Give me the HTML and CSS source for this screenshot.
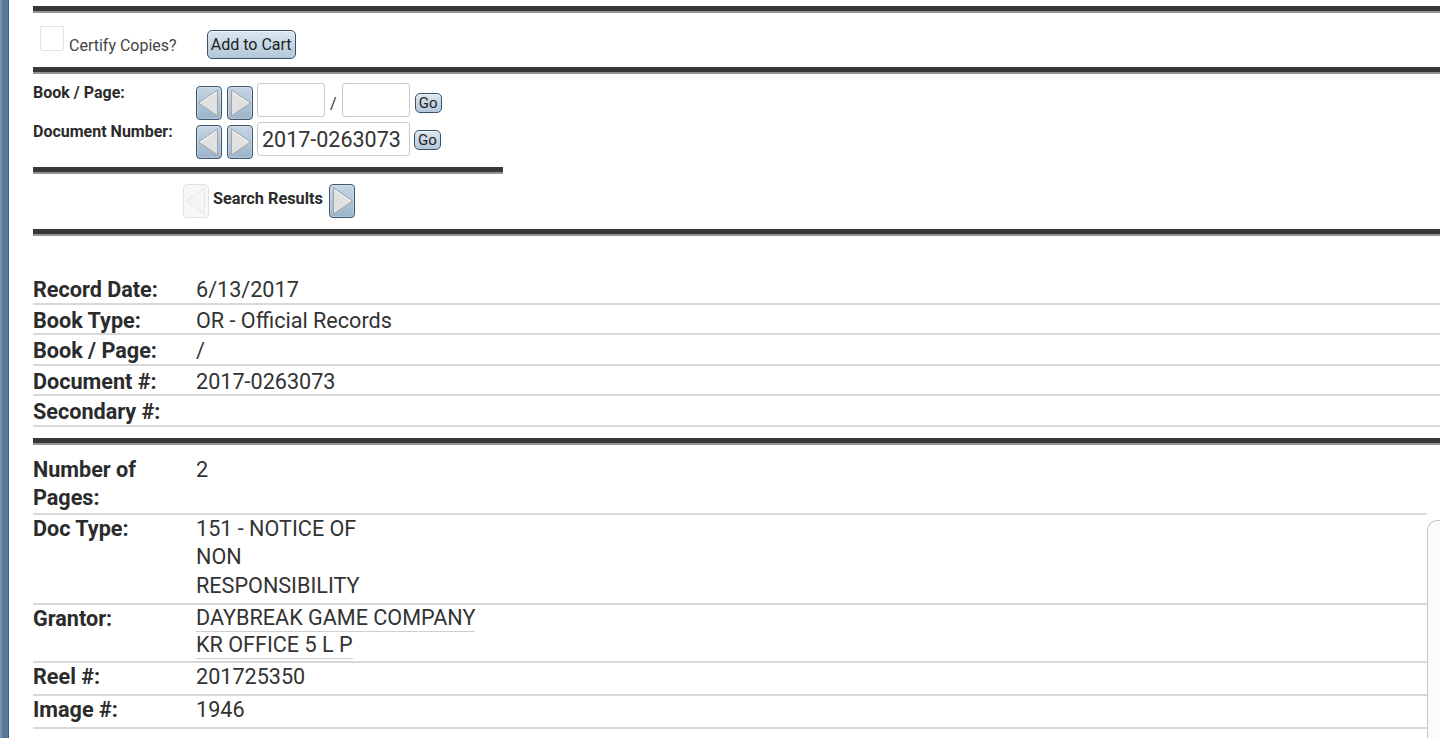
FILE: index.html
```html
<!DOCTYPE html>
<html lang="en">
<head>
<meta charset="utf-8">
<title>Document Detail</title>
<link rel="stylesheet" href="styles.css">
</head>
<body>
<div class="page">
  <div class="rail"></div>
  <main class="content">
    <div class="rule"></div>
    <div class="cart-bar">
      <span class="checkbox"></span>
      <span class="cert-label">Certify Copies?</span>
      <button class="btn cart-btn">Add to Cart</button>
    </div>
    <div class="rule"></div>
    <div class="nav-grid">
      <div class="nav-label">Book / Page:</div>
      <div class="nav-controls">
        <button class="arrow"><svg viewBox="0 0 24 32" width="24" height="32"><polygon points="1.5,16 20.5,3 20.5,29" fill="#e1e1e1" stroke="#9ea5ac" stroke-width="1"/><polyline points="3.5,16 19.5,5" fill="none" stroke="#fafafa" stroke-width="1"/></svg></button>
        <button class="arrow"><svg viewBox="0 0 24 32" width="24" height="32"><polygon points="22.5,16 3.5,3 3.5,29" fill="#e1e1e1" stroke="#9ea5ac" stroke-width="1"/><polyline points="4.5,5 20.5,16" fill="none" stroke="#fafafa" stroke-width="1"/></svg></button>
        <input class="field field-sm" type="text" value="">
        <span class="slash">/</span>
        <input class="field field-sm field-after" type="text" value="">
        <button class="btn go">Go</button>
      </div>
      <div class="nav-label">Document Number:</div>
      <div class="nav-controls">
        <button class="arrow"><svg viewBox="0 0 24 32" width="24" height="32"><polygon points="1.5,16 20.5,3 20.5,29" fill="#e1e1e1" stroke="#9ea5ac" stroke-width="1"/><polyline points="3.5,16 19.5,5" fill="none" stroke="#fafafa" stroke-width="1"/></svg></button>
        <button class="arrow"><svg viewBox="0 0 24 32" width="24" height="32"><polygon points="22.5,16 3.5,3 3.5,29" fill="#e1e1e1" stroke="#9ea5ac" stroke-width="1"/><polyline points="4.5,5 20.5,16" fill="none" stroke="#fafafa" stroke-width="1"/></svg></button>
        <input class="field field-lg" type="text" value="2017-0263073">
        <button class="btn go go-low">Go</button>
      </div>
    </div>
    <div class="rule rule-short"></div>
    <div class="results-bar">
      <button class="arrow arrow-disabled"><svg viewBox="0 0 24 32" width="24" height="32"><polygon points="1.5,16 20.5,3 20.5,29" fill="#f4f4f4" stroke="#e4e6e8" stroke-width="1"/></svg></button>
      <span class="results-label">Search Results</span>
      <button class="arrow"><svg viewBox="0 0 24 32" width="24" height="32"><polygon points="22.5,16 3.5,3 3.5,29" fill="#e1e1e1" stroke="#9ea5ac" stroke-width="1"/><polyline points="4.5,5 20.5,16" fill="none" stroke="#fafafa" stroke-width="1"/></svg></button>
    </div>
    <div class="rule"></div>
    <dl class="record record-top">
      <div class="row"><dt>Record Date:</dt><dd>6/13/2017</dd></div>
      <div class="row"><dt>Book Type:</dt><dd>OR - Official Records</dd></div>
      <div class="row"><dt>Book / Page:</dt><dd>/</dd></div>
      <div class="row"><dt>Document #:</dt><dd>2017-0263073</dd></div>
      <div class="row"><dt>Secondary #:</dt><dd></dd></div>
    </dl>
    <div class="rule"></div>
    <div class="lower">
      <dl class="record record-bottom">
        <div class="row row-first"><dt>Number of Pages:</dt><dd>2</dd></div>
        <div class="row"><dt>Doc Type:</dt><dd><span class="doc-type">151 - NOTICE OF NON RESPONSIBILITY</span></dd></div>
        <div class="row"><dt>Grantor:</dt><dd class="names"><a class="name">DAYBREAK GAME COMPANY</a><a class="name">KR OFFICE 5 L P</a></dd></div>
        <div class="row"><dt>Reel #:</dt><dd>201725350</dd></div>
        <div class="row"><dt>Image #:</dt><dd>1946</dd></div>
      </dl>
      <div class="side-panel"></div>
    </div>
  </main>
</div>
</body>
</html>
```
FILE: styles.css
```css
* { box-sizing: border-box; }
html, body { margin: 0; padding: 0; }
body {
  font-family: Roboto, "Noto Sans", "Liberation Sans", sans-serif;
  color: #333;
  background: #fff;
  overflow: hidden;
}
.page { display: flex; min-height: 100vh; }
.rail {
  flex: none;
  width: 9px;
  background: linear-gradient(to right, #7892ad 0, #7892ad 2px, #5a7999 2px, #5a7999 8px, #3e5c7a 8px);
}
.content { flex: 1; min-width: 0; padding: 6px 0 0 24px; }

.rule { height: 7px; background: #383838; border-bottom: 2px solid #939393; }
.rule-short { width: 470px; }

.cart-bar { display: flex; align-items: flex-start; height: 54px; padding: 13px 0 0 7px; }
.checkbox { width: 24px; height: 25px; border: 1px solid #e2e2e2; border-radius: 2px; background: #fff; }
.cert-label { margin: 10px 0 0 5px; font-size: 16px; line-height: 19px; color: #444; }
.btn {
  font-family: inherit;
  color: #222;
  border: 1px solid #34526d;
  border-radius: 5px;
  background: linear-gradient(#dce7f0, #b2c7d9);
  box-shadow: inset 0 1px 0 rgba(255,255,255,0.6);
  padding: 0;
}
.cart-btn { margin: 4px 0 0 30px; width: 89px; height: 29px; font-size: 16px; }

.nav-grid {
  display: grid;
  grid-template-columns: 163px auto;
  justify-content: start;
  row-gap: 2px;
  padding: 9px 0 8px;
}
.nav-label { font-size: 16px; font-weight: 700; line-height: 19px; color: #2b2b2b; }
.nav-controls { display: flex; align-items: flex-start; height: 37px; }
.arrow {
  flex: none;
  width: 26px;
  height: 34px;
  margin-top: 3px;
  padding: 0;
  border: 1px solid #3b5670;
  border-radius: 4px;
  background: linear-gradient(#c5d5e4, #9db4c9);
  box-shadow: inset 0 0 0 1px rgba(255,255,255,0.25);
  display: flex;
  align-items: center;
  justify-content: center;
}
.arrow svg { display: block; }
.arrow + .arrow { margin-left: 5px; }
.field {
  flex: none;
  margin-left: 4px;
  height: 34px;
  border: 1px solid #cacaca;
  border-radius: 3px;
  font-family: inherit;
  font-size: 21.5px;
  color: #333;
  padding: 0 4px;
  background: #fff;
  outline: none;
}
.field-sm { width: 68px; }
.field-lg { width: 153px; }
.field-after { margin-left: 0; }
.slash { margin: 11px 5px 0 5px; font-size: 16px; line-height: 19px; color: #333; }
.go { flex: none; width: 27px; height: 20px; font-size: 15px; line-height: 18px; margin: 10px 0 0 5px; }
.go-low { margin: 8px 0 0 4px; }

.results-bar { display: flex; align-items: flex-start; height: 55px; padding: 10px 0 0 150px; }
.results-bar .arrow { margin-top: 0; }
.arrow-disabled { border-color: #dde2e6; background: #f5f7f9; box-shadow: none; }
.results-label { margin: 5px 6px 0 4px; font-size: 16.3px; font-weight: 700; line-height: 19px; color: #2b2b2b; }

.record { margin: 0; }
.record-top { padding-top: 38px; margin-bottom: 11px; }
.row { display: grid; grid-template-columns: 163px 1fr; border-bottom: 2px solid #d9d9d9; }
.record-top .row { padding-top: 3px; line-height: 25.5px; }
.record dt { font-weight: 700; font-size: 21.6px; color: #2b2b2b; padding-right: 6px; }
.record dd { margin: 0; font-size: 21.6px; color: #333; }

.lower { display: flex; align-items: flex-start; padding-top: 11px; }
.record-bottom { flex: 1; min-width: 0; }
.record-bottom .row { line-height: 28.5px; padding: 0 0 2.5px; }
.record-bottom .row-first { padding: 0; }
.doc-type { display: block; max-width: 180px; }
.names { display: flex; flex-direction: column; align-items: flex-start; }
.name { line-height: 26px; border-bottom: 1.5px solid #cfcfcf; color: #333; text-decoration: none; }

.side-panel {
  flex: none;
  width: 13px;
  height: 320px;
  margin-top: 64px;
  border: 1px solid #c4c4c4;
  border-right: 0;
  border-radius: 10px 0 0 0;
  background: #fbfbfb;
}
```
